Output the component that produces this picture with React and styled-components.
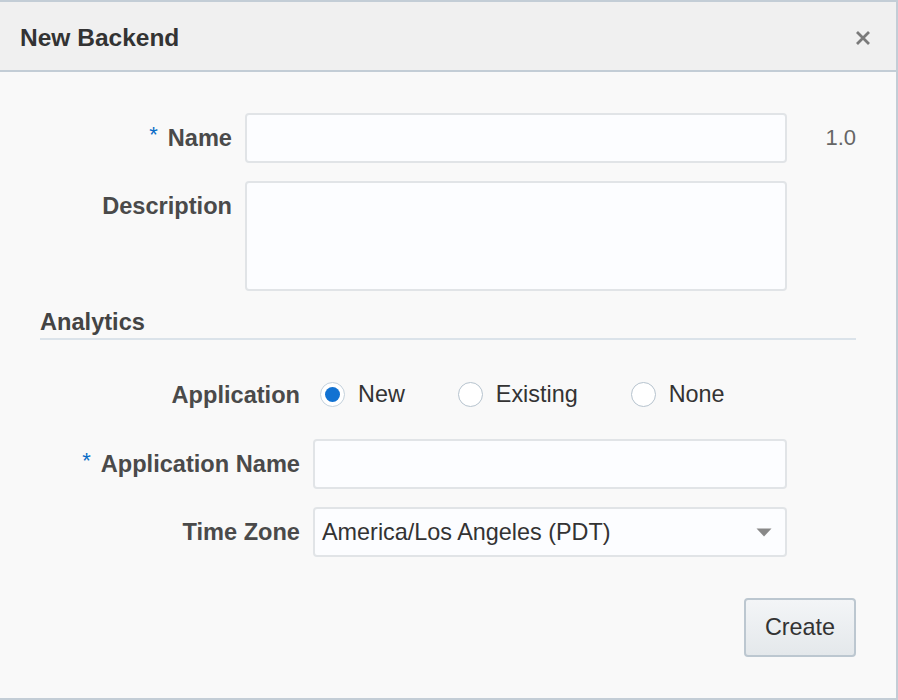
import React from "react";
import styled, { createGlobalStyle } from "styled-components";

const GlobalStyle = createGlobalStyle`
  html, body {
    margin: 0;
    padding: 0;
    background: #f9f9f9;
  }
  body {
    font-family: "Liberation Sans", Arial, Helvetica, sans-serif;
    color: #333;
  }
  * { box-sizing: border-box; }
`;

const Dialog = styled.div`
  width: 898px;
  height: 700px;
  display: flex;
  flex-direction: column;
  background: #f9f9f9;
  border-top: 2px solid #c3cdd6;
  border-right: 2px solid #c3cdd6;
  border-bottom: 2px solid #c3cdd6;
`;

const Header = styled.div`
  height: 70px;
  flex: none;
  display: flex;
  align-items: center;
  justify-content: space-between;
  padding: 3px 24px 0 20px;
  background: #f0f0f0;
  border-bottom: 2px solid #c3cdd6;
`;

const Title = styled.h1`
  margin: 0;
  font-size: 24.5px;
  font-weight: 700;
  color: #333;
`;

const CloseButton = styled.button`
  width: 18px;
  height: 18px;
  padding: 0;
  border: none;
  background: transparent;
  display: flex;
  align-items: center;
  justify-content: center;
  cursor: pointer;
`;

const Body = styled.div`
  flex: 1;
  display: flex;
  flex-direction: column;
  padding: 41px 40px 0 40px;
`;

const FieldGrid = styled.div`
  display: grid;
  grid-template-columns: ${(p) => p.$labelWidth}px ${(p) => p.$fieldWidth}px 1fr;
  grid-template-rows: ${(p) => p.$rows || "none"};
  column-gap: 13px;
  row-gap: 18px;
  align-items: ${(p) => p.$align || "start"};
  margin-top: ${(p) => p.$top || 0}px;
`;

const Label = styled.label`
  display: block;
  height: 50px;
  text-align: right;
  font-size: 23.6px;
  font-weight: 700;
  line-height: 50px;
  color: #4a4a4a;
  white-space: nowrap;
`;

const Required = styled.span`
  color: #0a6cc7;
  font-size: 22px;
  font-weight: 400;
  line-height: 0;
  margin-right: 10px;
  vertical-align: 4px;
`;

const TextInput = styled.input`
  width: 100%;
  height: 50px;
  border: 2px solid #e1e4e7;
  border-radius: 4px;
  background: #fcfdff;
  font-family: inherit;
  font-size: 23.4px;
  color: #333;
  padding: 0 8px;
  outline: none;
`;

const TextArea = styled.textarea`
  width: 100%;
  height: 110px;
  border: 2px solid #e1e4e7;
  border-radius: 4px;
  background: #fcfdff;
  font-family: inherit;
  font-size: 23.4px;
  color: #333;
  padding: 8px;
  resize: none;
  outline: none;
  display: block;
`;

const Version = styled.span`
  justify-self: end;
  font-size: 22px;
  line-height: 50px;
  color: #666;
`;

const SectionHeading = styled.h2`
  margin: 17px 0 0 0;
  font-size: 23.6px;
  font-weight: 700;
  line-height: 28px;
  color: #444;
  padding-bottom: 2px;
  border-bottom: 2px solid #dbe3ea;
`;

const RadioGroup = styled.div`
  display: flex;
  align-items: center;
  gap: 53px;
  padding-left: 7px;
`;

const RadioOption = styled.label`
  display: flex;
  align-items: center;
  gap: 13px;
  font-size: 23.4px;
  color: #333;
  cursor: pointer;
`;

const RadioCircle = styled.span`
  width: 25px;
  height: 25px;
  border-radius: 50%;
  border: 1.5px solid ${(p) => (p.$checked ? "#c4d1dc" : "#b6c3ce")};
  background: #fff;
  display: flex;
  align-items: center;
  justify-content: center;
  flex: none;

  &::after {
    content: "";
    width: 15px;
    height: 15px;
    border-radius: 50%;
    background: ${(p) => (p.$checked ? "#1272d2" : "transparent")};
  }
`;

const Select = styled.div`
  height: 50px;
  border: 2px solid #e1e4e7;
  border-radius: 4px;
  background: #fcfdff;
  display: flex;
  align-items: center;
  justify-content: space-between;
  padding: 0 13px 0 7px;
  font-size: 23.4px;
  color: #333;
  cursor: pointer;
`;

const Footer = styled.div`
  display: flex;
  justify-content: flex-end;
  margin-top: 41px;
`;

const PrimaryButton = styled.button`
  width: 112px;
  height: 59px;
  border: 2px solid #bcc7d0;
  border-radius: 4px;
  background: linear-gradient(#f3f5f7, #e4e8eb);
  font-family: inherit;
  font-size: 23.4px;
  color: #333;
  cursor: pointer;
`;

function CloseIcon() {
  return (
    <svg width="16" height="16" viewBox="0 0 16 16">
      <path d="M2 2 L14 14 M14 2 L2 14" stroke="#7a7a7a" strokeWidth="2.8" strokeLinecap="butt" />
    </svg>
  );
}

function CaretDown() {
  return (
    <svg width="16" height="9" viewBox="0 0 16 9">
      <path d="M0.5 0.5 L15.5 0.5 L8 8.5 Z" fill="#888" />
    </svg>
  );
}

function Radio({ label, checked }) {
  return (
    <RadioOption>
      <RadioCircle $checked={checked} />
      {label}
    </RadioOption>
  );
}

export default function App() {
  return (
    <>
      <GlobalStyle />
      <Dialog>
        <Header>
          <Title>New Backend</Title>
          <CloseButton aria-label="Close">
            <CloseIcon />
          </CloseButton>
        </Header>
        <Body>
          <FieldGrid $labelWidth={192} $fieldWidth={542}>
            <Label>
              <Required>*</Required>Name
            </Label>
            <TextInput />
            <Version>1.0</Version>
            <Label>Description</Label>
            <TextArea />
            <span />
          </FieldGrid>

          <SectionHeading>Analytics</SectionHeading>

          <FieldGrid
            $labelWidth={260}
            $fieldWidth={474}
            $rows="53px 50px 50px"
            $align="center"
            $top={28}
          >
            <Label>Application</Label>
            <RadioGroup>
              <Radio label="New" checked />
              <Radio label="Existing" />
              <Radio label="None" />
            </RadioGroup>
            <span />
            <Label>
              <Required>*</Required>Application Name
            </Label>
            <TextInput />
            <span />
            <Label>Time Zone</Label>
            <Select>
              <span>America/Los Angeles (PDT)</span>
              <CaretDown />
            </Select>
            <span />
          </FieldGrid>

          <Footer>
            <PrimaryButton>Create</PrimaryButton>
          </Footer>
        </Body>
      </Dialog>
    </>
  );
}
